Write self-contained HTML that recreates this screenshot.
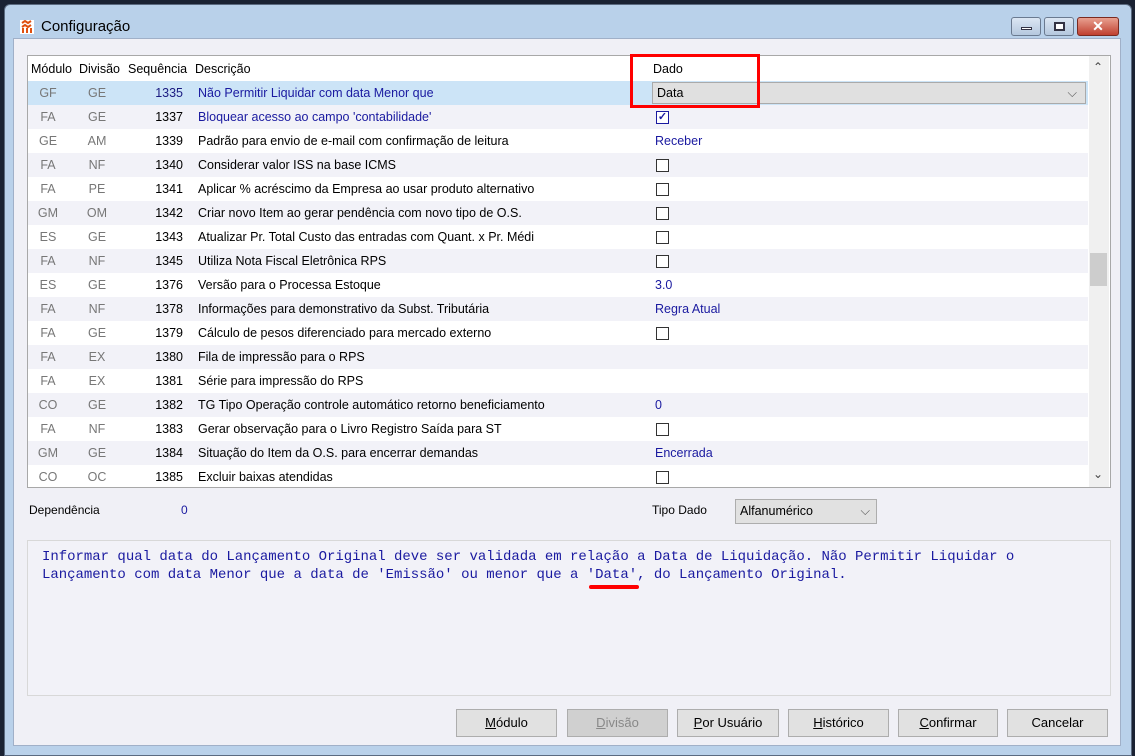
<!DOCTYPE html>
<html><head><meta charset="utf-8"><style>
*{margin:0;padding:0;box-sizing:border-box}
body{width:1135px;height:756px;overflow:hidden;background:#1a2233;font-family:"Liberation Sans",sans-serif;font-size:12px;position:relative}
.win{position:absolute;left:4px;top:4px;width:1128px;height:752px;background:#b9d1ea;border:1px solid #5a6a80;border-radius:6px 6px 0 0}
.title{position:absolute;left:36px;top:13px;font-size:15px;color:#000}
.client{position:absolute;left:13px;top:38px;width:1108px;height:708px;background:#f0f0f6;border:1px solid #a0b0c8}
.grid{position:absolute;left:27px;top:55px;width:1084px;height:433px;background:#fff;border:1px solid #a8a8a8;overflow:hidden}
.row{position:absolute;left:0;width:1060px;height:24px;line-height:24px;color:#000;font-size:12.5px}
.row span{position:absolute}
.m{left:0;width:40px;text-align:center;color:#777}
.d{left:50px;width:38px;text-align:center;color:#777}
.s{left:100px;width:55px;text-align:right}
.ds{left:170px}
.v{left:627px;color:#1a1aa0}
.cb{position:absolute;left:628px;top:6px;width:13px;height:13px;border:1px solid #333;background:#fff}
.sb{position:absolute;left:1061px;top:0;width:20px;height:431px;background:#f0f0f0}
.btn{position:absolute;top:709px;height:28px;background:#e1e1e1;border:1px solid #adadad;text-align:center;line-height:26px;font-size:13px;color:#000}
.btn u{text-decoration:underline}
</style></head><body>
<div class="win">
 <svg style="position:absolute;left:15px;top:15px" width="14" height="14"><rect width="14" height="14" fill="#fff"/><path d="M2 3l3 -2 3 2 3 -2M2 7l3-2 3 2 3-2M3 13V8M7 13V8M11 13V8" stroke="#e05010" stroke-width="2" fill="none"/></svg>
 <div class="title">Configuração</div>
 <div style="position:absolute;left:1006px;top:12px;width:30px;height:19px;border:1px solid #6a7a90;border-radius:3px;background:linear-gradient(#dbe6f3,#b5c8de)"><div style="position:absolute;left:9px;top:9px;width:11px;height:3px;background:#fff;border:1px solid #334"></div></div>
 <div style="position:absolute;left:1039px;top:12px;width:30px;height:19px;border:1px solid #6a7a90;border-radius:3px;background:linear-gradient(#dbe6f3,#b5c8de)"><div style="position:absolute;left:9px;top:4px;width:11px;height:9px;border:2px solid #334;background:#fff"></div></div>
 <div style="position:absolute;left:1072px;top:12px;width:42px;height:19px;border:1px solid #7a2a20;border-radius:3px;background:linear-gradient(#e8a090,#c04030);color:#fff;text-align:center;font-weight:bold;font-size:14px;line-height:17px">✕</div>
</div>
<div class="client"></div>
<div class="grid">
 <div class="row" style="top:2px;height:22px;line-height:22px"><span style="left:3px">Módulo</span><span style="left:51px">Divisão</span><span style="left:100px">Sequência</span><span style="left:167px">Descrição</span><span style="left:625px">Dado</span></div>
 <div class="row" style="top:25px;background:#cce4f7"><span class="m">GF</span><span class="d">GE</span><span class="s" style="color:#1a1a80">1335</span><span class="ds" style="color:#1a1aa0">Não Permitir Liquidar com data Menor que</span></div>
 <div style="position:absolute;left:624px;top:26px;width:434px;height:22px;background:#e0e0e0;border:1px solid #aaa;line-height:20px;padding-left:4px;font-size:12.5px">Data<span style="position:absolute;right:8px;color:#555">⌵</span></div>
 <div class="row" style="top:49px;background:#f2f2f8"><span class="m">FA</span><span class="d">GE</span><span class="s">1337</span><span class="ds" style="color:#1a1aa0">Bloquear acesso ao campo 'contabilidade'</span><div class="cb" style="border-color:#1a1aa0;color:#1a1aa0;font-size:11px;line-height:11px;text-align:center;font-weight:bold">✓</div></div>
 <div class="row" style="top:73px"><span class="m">GE</span><span class="d">AM</span><span class="s">1339</span><span class="ds">Padrão para envio de e-mail com confirmação de leitura</span><span class="v">Receber</span></div>
 <div class="row" style="top:97px;background:#f2f2f8"><span class="m">FA</span><span class="d">NF</span><span class="s">1340</span><span class="ds">Considerar valor ISS na base ICMS</span><div class="cb"></div></div>
 <div class="row" style="top:121px"><span class="m">FA</span><span class="d">PE</span><span class="s">1341</span><span class="ds">Aplicar % acréscimo da Empresa ao usar produto alternativo</span><div class="cb"></div></div>
 <div class="row" style="top:145px;background:#f2f2f8"><span class="m">GM</span><span class="d">OM</span><span class="s">1342</span><span class="ds">Criar novo Item ao gerar pendência com novo tipo de O.S.</span><div class="cb"></div></div>
 <div class="row" style="top:169px"><span class="m">ES</span><span class="d">GE</span><span class="s">1343</span><span class="ds">Atualizar Pr. Total Custo das entradas com Quant. x Pr. Médi</span><div class="cb"></div></div>
 <div class="row" style="top:193px;background:#f2f2f8"><span class="m">FA</span><span class="d">NF</span><span class="s">1345</span><span class="ds">Utiliza Nota Fiscal Eletrônica RPS</span><div class="cb"></div></div>
 <div class="row" style="top:217px"><span class="m">ES</span><span class="d">GE</span><span class="s">1376</span><span class="ds">Versão para o Processa Estoque</span><span class="v">3.0</span></div>
 <div class="row" style="top:241px;background:#f2f2f8"><span class="m">FA</span><span class="d">NF</span><span class="s">1378</span><span class="ds">Informações para demonstrativo da Subst. Tributária</span><span class="v">Regra Atual</span></div>
 <div class="row" style="top:265px"><span class="m">FA</span><span class="d">GE</span><span class="s">1379</span><span class="ds">Cálculo de pesos diferenciado para mercado externo</span><div class="cb"></div></div>
 <div class="row" style="top:289px;background:#f2f2f8"><span class="m">FA</span><span class="d">EX</span><span class="s">1380</span><span class="ds">Fila de impressão para o RPS</span></div>
 <div class="row" style="top:313px"><span class="m">FA</span><span class="d">EX</span><span class="s">1381</span><span class="ds">Série para impressão do RPS</span></div>
 <div class="row" style="top:337px;background:#f2f2f8"><span class="m">CO</span><span class="d">GE</span><span class="s">1382</span><span class="ds">TG Tipo Operação controle automático retorno beneficiamento</span><span class="v">0</span></div>
 <div class="row" style="top:361px"><span class="m">FA</span><span class="d">NF</span><span class="s">1383</span><span class="ds">Gerar observação para o Livro Registro Saída para ST</span><div class="cb"></div></div>
 <div class="row" style="top:385px;background:#f2f2f8"><span class="m">GM</span><span class="d">GE</span><span class="s">1384</span><span class="ds">Situação do Item da O.S. para encerrar demandas</span><span class="v">Encerrada</span></div>
 <div class="row" style="top:409px"><span class="m">CO</span><span class="d">OC</span><span class="s">1385</span><span class="ds">Excluir baixas atendidas</span><div class="cb"></div></div>
 <div class="sb"><div style="position:absolute;left:4px;top:4px;font-size:12px;color:#444">⌃</div><div style="position:absolute;left:1px;top:197px;width:17px;height:33px;background:#cdcdcd"></div><div style="position:absolute;left:4px;top:411px;font-size:12px;color:#444">⌄</div></div>
</div>
<div style="position:absolute;left:630px;top:54px;width:130px;height:54px;border:3px solid #f00"></div>
<div style="position:absolute;left:29px;top:503px;font-size:12px">Dependência</div>
<div style="position:absolute;left:181px;top:503px;font-size:12px;color:#1a1aa0">0</div>
<div style="position:absolute;left:652px;top:503px;font-size:12px">Tipo Dado</div>
<div style="position:absolute;left:735px;top:499px;width:142px;height:25px;background:#e1e1e1;border:1px solid #adadad;line-height:23px;padding-left:4px;font-size:12.5px">Alfanumérico<span style="position:absolute;right:6px;color:#555">⌵</span></div>
<div style="position:absolute;left:27px;top:540px;width:1084px;height:156px;border:1px solid #d8d8d8;background:#f2f2f8;font-family:'Liberation Mono',monospace;font-size:14px;letter-spacing:-0.02px;color:#1a1aa0;line-height:18px;padding:7px 14px;white-space:nowrap">Informar qual data do Lançamento Original deve ser validada em relação a Data de Liquidação. Não Permitir Liquidar o<br>Lançamento com data Menor que a data de 'Emissão' ou menor que a 'Data', do Lançamento Original.</div>
<div style="position:absolute;left:589px;top:585px;width:50px;height:4px;background:#f00;border-radius:2px"></div>
<div class="btn" style="left:456px;width:101px"><u>M</u>ódulo</div>
<div class="btn" style="left:567px;width:101px;color:#888;background:#d0d0d0"><u>D</u>ivisão</div>
<div class="btn" style="left:677px;width:102px"><u>P</u>or Usuário</div>
<div class="btn" style="left:788px;width:101px"><u>H</u>istórico</div>
<div class="btn" style="left:898px;width:100px"><u>C</u>onfirmar</div>
<div class="btn" style="left:1007px;width:101px">Cancelar</div>
</body></html>
